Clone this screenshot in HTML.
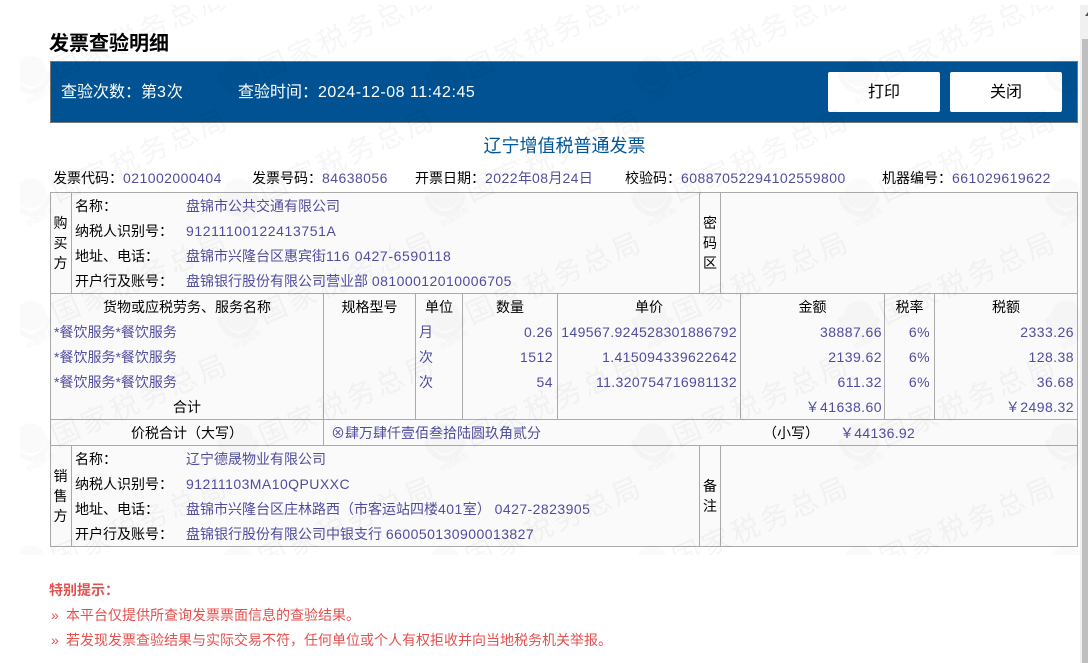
<!DOCTYPE html>
<html lang="zh">
<head>
<meta charset="utf-8">
<title>发票查验明细</title>
<style>
html,body{margin:0;padding:0;background:#fff;width:1088px;height:663px;overflow:hidden}
body{position:relative;font-family:"Liberation Sans","Noto Sans CJK SC",sans-serif;font-size:14px;color:#000}
.t{position:absolute;white-space:nowrap;line-height:20px;height:20px}
.v{color:#4f4d9f}
.n{letter-spacing:.45px}
.r{text-align:right}
.c{text-align:center}
.h,.l{position:absolute;background:#aaa}
.h{height:1px}
.l{width:1px}
.btn{position:absolute;top:72px;width:112px;height:40px;background:#fff;border-radius:2px;font-size:16px;line-height:42px;text-align:center}
.red{color:#e4504e}
.vt{position:absolute;width:20px;text-align:center;line-height:20px}
</style>
</head>
<body>
<div style="position:absolute;left:50px;top:192px;width:1028px;height:355px;background:#fafafa"></div>
<div class="t" style="left:49px;top:32px;font-size:20px;font-weight:bold;line-height:24px;height:24px">发票查验明细</div>

<div style="position:absolute;left:50px;top:61px;width:1026px;height:60px;background:#005292;border:1px solid #777"></div>
<div class="t" style="left:61px;top:83px;font-size:16px;color:#fff">查验次数：第<span style="letter-spacing:1px">3</span>次</div>
<div class="t" style="left:238px;top:83px;font-size:16px;color:#fff">查验时间：<span style="letter-spacing:.52px">2024-12-08 11:42:45</span></div>
<div class="btn" style="left:828px">打印</div>
<div class="btn" style="left:950px">关闭</div>

<div class="t" style="left:483.5px;top:136px;font-size:18px;color:#00569a">辽宁增值税普通发票</div>

<div class="t" style="left:53px;top:168px">发票代码：<span class="v n">021002000404</span></div>
<div class="t" style="left:252px;top:168px">发票号码：<span class="v n">84638056</span></div>
<div class="t" style="left:415px;top:168px">开票日期：<span class="v"><span class="n">2022</span>年<span class="n">08</span>月<span class="n">24</span>日</span></div>
<div class="t" style="left:625px;top:168px">校验码：<span class="v n">60887052294102559800</span></div>
<div class="t" style="left:882px;top:168px">机器编号：<span class="v n">661029619622</span></div>

<!-- grid -->
<div class="h" style="left:50px;top:192px;width:1028px"></div>
<div class="h" style="left:50px;top:293px;width:1028px"></div>
<div class="h" style="left:50px;top:419px;width:1028px"></div>
<div class="h" style="left:50px;top:445px;width:1028px"></div>
<div class="h" style="left:50px;top:546px;width:1028px"></div>
<div class="l" style="left:50px;top:192px;height:355px"></div>
<div class="l" style="left:1077px;top:192px;height:355px"></div>
<div class="l" style="left:71px;top:192px;height:101px"></div>
<div class="l" style="left:71px;top:445px;height:101px"></div>
<div class="l" style="left:699px;top:192px;height:101px"></div>
<div class="l" style="left:720px;top:192px;height:101px"></div>
<div class="l" style="left:699px;top:445px;height:101px"></div>
<div class="l" style="left:720px;top:445px;height:101px"></div>
<div class="l" style="left:323px;top:293px;height:152px"></div>
<div class="l" style="left:415px;top:293px;height:126px"></div>
<div class="l" style="left:462px;top:293px;height:126px"></div>
<div class="l" style="left:557px;top:293px;height:126px"></div>
<div class="l" style="left:740px;top:293px;height:126px"></div>
<div class="l" style="left:884px;top:293px;height:126px"></div>
<div class="l" style="left:934px;top:293px;height:126px"></div>

<!-- buyer -->
<div class="vt" style="left:50.5px;top:213px">购<br>买<br>方</div>
<div class="t" style="left:75px;top:196px">名称：</div>
<div class="t v" style="left:186px;top:196px">盘锦市公共交通有限公司</div>
<div class="t" style="left:75px;top:221px">纳税人识别号：</div>
<div class="t v" style="left:186px;top:221px;letter-spacing:.6px">91211100122413751A</div>
<div class="t" style="left:75px;top:246px">地址、电话：</div>
<div class="t v" style="left:186px;top:246px">盘锦市兴隆台区惠宾街<span style="letter-spacing:.62px">116 0427-6590118</span></div>
<div class="t" style="left:75px;top:271px">开户行及账号：</div>
<div class="t v" style="left:186px;top:271px">盘锦银行股份有限公司营业部 <span class="n">08100012010006705</span></div>
<div class="vt" style="left:700px;top:213px">密<br>码<br>区</div>

<!-- goods -->
<div class="t c" style="left:51px;width:272px;top:297px">货物或应税劳务、服务名称</div>
<div class="t c" style="left:324px;width:91px;top:297px">规格型号</div>
<div class="t c" style="left:416px;width:46px;top:297px">单位</div>
<div class="t c" style="left:463px;width:94px;top:297px">数量</div>
<div class="t c" style="left:558px;width:182px;top:297px">单价</div>
<div class="t c" style="left:741px;width:143px;top:297px">金额</div>
<div class="t c" style="left:885px;width:49px;top:297px">税率</div>
<div class="t c" style="left:935px;width:142px;top:297px">税额</div>

<div class="t v" style="left:54px;top:322px">*餐饮服务*餐饮服务</div>
<div class="t v" style="left:419px;top:322px">月</div>
<div class="t v r n" style="right:535px;top:322px">0.26</div>
<div class="t v r" style="right:351px;top:322px;letter-spacing:.38px">149567.924528301886792</div>
<div class="t v r n" style="right:206px;top:322px">38887.66</div>
<div class="t v r n" style="right:158px;top:322px">6%</div>
<div class="t v r n" style="right:14px;top:322px">2333.26</div>

<div class="t v" style="left:54px;top:347px">*餐饮服务*餐饮服务</div>
<div class="t v" style="left:419px;top:347px">次</div>
<div class="t v r n" style="right:535px;top:347px">1512</div>
<div class="t v r" style="right:351px;top:347px;letter-spacing:.38px">1.415094339622642</div>
<div class="t v r n" style="right:206px;top:347px">2139.62</div>
<div class="t v r n" style="right:158px;top:347px">6%</div>
<div class="t v r n" style="right:14px;top:347px">128.38</div>

<div class="t v" style="left:54px;top:372px">*餐饮服务*餐饮服务</div>
<div class="t v" style="left:419px;top:372px">次</div>
<div class="t v r n" style="right:535px;top:372px">54</div>
<div class="t v r" style="right:351px;top:372px;letter-spacing:.38px">11.320754716981132</div>
<div class="t v r n" style="right:206px;top:372px">611.32</div>
<div class="t v r n" style="right:158px;top:372px">6%</div>
<div class="t v r n" style="right:14px;top:372px">36.68</div>

<div class="t c" style="left:51px;width:272px;top:397px">合计</div>
<div class="t v r n" style="right:206px;top:397px">￥41638.60</div>
<div class="t v r n" style="right:14px;top:397px">￥2498.32</div>

<!-- total -->
<div class="t" style="left:131px;top:423px">价税合计（大写）</div>
<div class="t v" style="left:331px;top:423px">⊗肆万肆仟壹佰叁拾陆圆玖角贰分</div>
<div class="t" style="left:763px;top:423px">（小写）</div>
<div class="t v" style="left:840px;top:423px;letter-spacing:.3px">￥44136.92</div>

<!-- seller -->
<div class="vt" style="left:50.5px;top:466px">销<br>售<br>方</div>
<div class="t" style="left:75px;top:449px">名称：</div>
<div class="t v" style="left:186px;top:449px">辽宁德晟物业有限公司</div>
<div class="t" style="left:75px;top:474px">纳税人识别号：</div>
<div class="t v n" style="left:186px;top:474px">91211103MA10QPUXXC</div>
<div class="t" style="left:75px;top:499px">地址、电话：</div>
<div class="t v" style="left:186px;top:499px">盘锦市兴隆台区庄林路西（市客运站四楼<span class="n">401</span>室） <span class="n">0427-2823905</span></div>
<div class="t" style="left:75px;top:524px">开户行及账号：</div>
<div class="t v" style="left:186px;top:524px">盘锦银行股份有限公司中银支行 <span class="n">660050130900013827</span></div>
<div class="vt" style="left:700px;top:476px">备<br>注</div>

<!-- tips -->
<div class="t red" style="left:49px;top:580px;font-weight:bold">特别提示：</div>
<div class="t red" style="left:51px;top:605px">»</div>
<div class="t red" style="left:66px;top:605px">本平台仅提供所查询发票票面信息的查验结果。</div>
<div class="t red" style="left:51px;top:630px">»</div>
<div class="t red" style="left:66px;top:630px">若发现发票查验结果与实际交易不符，任何单位或个人有权拒收并向当地税务机关举报。</div>

<!-- watermark -->
<svg width="1080" height="550" viewBox="0 5 1080 550" style="position:absolute;left:0;top:5px;pointer-events:none">
<defs>
<pattern id="wm" x="0" y="-48" width="207" height="122.4" patternUnits="userSpaceOnUse">
<g fill="#000" fill-opacity=".035" font-family="'Noto Sans CJK SC',sans-serif">
<circle cx="31" cy="119" r="15" fill-opacity=".02"/>
<circle cx="31" cy="-3.4" r="15" fill-opacity=".02"/>
<path d="M15 -3q2 14 16 18q14-4 16-18l5 3q-4 17-21 20q-17-3-21-20z" fill-opacity=".025"/>
<path d="M15 119q2 14 16 18q14-4 16-18l5 3q-4 17-21 20q-17-3-21-20z" fill-opacity=".025"/>
<text transform="translate(57 5.3) rotate(-23.5)" font-size="28" letter-spacing="3.8">国家税务总局</text>
<text transform="translate(57 127.7) rotate(-23.5)" font-size="28" letter-spacing="3.8">国家税务总局</text>
<text transform="translate(-150 5.3) rotate(-23.5)" font-size="28" letter-spacing="3.8">国家税务总局</text>
<text transform="translate(-150 127.7) rotate(-23.5)" font-size="28" letter-spacing="3.8">国家税务总局</text>
<text transform="translate(28 31) rotate(-30)" font-size="8">中国税务</text>
</g>
</pattern>
</defs>
<rect x="20" y="5" width="1060" height="550" fill="url(#wm)"/>
</svg>

<!-- scrollbar -->
<div style="position:absolute;left:1080px;top:5px;width:8px;height:658px;background:#f0f0f0"></div>
<div style="position:absolute;left:1082px;top:39px;width:6px;height:624px;background:#bfbfbf"></div>
<div style="position:absolute;left:1085px;top:12px;width:0;height:0;border-left:3px solid transparent;border-right:3px solid transparent;border-bottom:4px solid #505050"></div>
</body>
</html>
